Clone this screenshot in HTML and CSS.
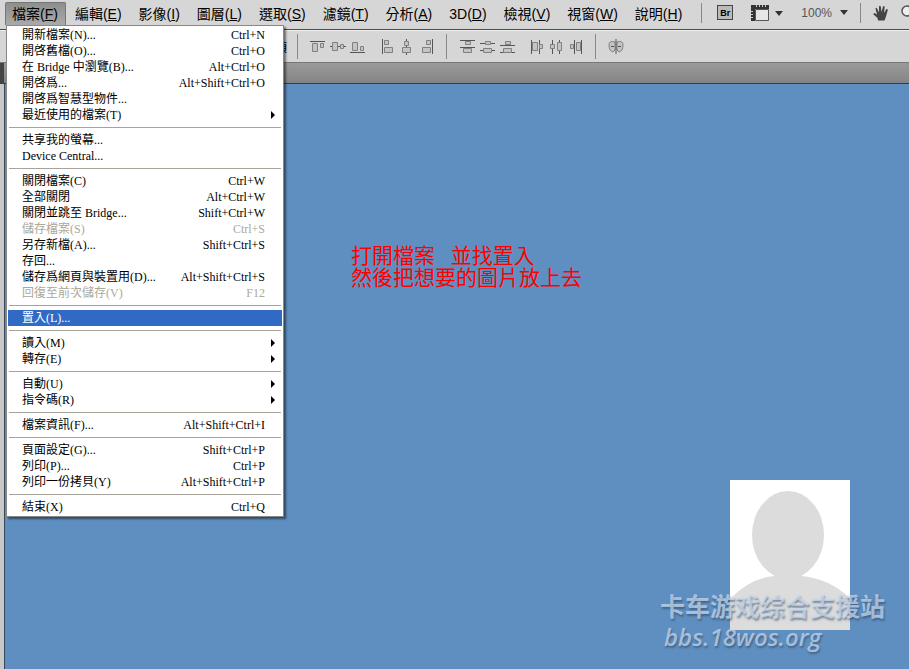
FILE: index.html
```
<!DOCTYPE html>
<html lang="zh-Hant">
<head>
  <meta charset="UTF-8">
  <meta name="viewport" content="width=device-width, initial-scale=1">
  <title>Photoshop</title>
  <link rel="stylesheet" href="styles.css">
</head>
<body>
  <div class="app">
    <header class="menubar">
      <nav class="menus">
        <div class="menu-holder">
          <button type="button" class="menu-btn open">檔案(<u>F</u>)</button>
          <div class="dropdown">
            <button type="button" class="row">開新檔案(N)...<span>Ctrl+N</span></button>
            <button type="button" class="row">開啓舊檔(O)...<span>Ctrl+O</span></button>
            <button type="button" class="row">在 Bridge 中瀏覽(B)...<span>Alt+Ctrl+O</span></button>
            <button type="button" class="row">開啓爲...<span>Alt+Shift+Ctrl+O</span></button>
            <button type="button" class="row">開啓爲智慧型物件...</button>
            <button type="button" class="row sub">最近使用的檔案(T)</button>
            <hr>
            <button type="button" class="row">共享我的螢幕...</button>
            <button type="button" class="row">Device Central...</button>
            <hr>
            <button type="button" class="row">關閉檔案(C)<span>Ctrl+W</span></button>
            <button type="button" class="row">全部關閉<span>Alt+Ctrl+W</span></button>
            <button type="button" class="row">關閉並跳至 Bridge...<span>Shift+Ctrl+W</span></button>
            <button type="button" class="row" disabled>儲存檔案(S)<span>Ctrl+S</span></button>
            <button type="button" class="row">另存新檔(A)...<span>Shift+Ctrl+S</span></button>
            <button type="button" class="row">存回...</button>
            <button type="button" class="row">儲存爲網頁與裝置用(D)...<span>Alt+Shift+Ctrl+S</span></button>
            <button type="button" class="row" disabled>回復至前次儲存(V)<span>F12</span></button>
            <hr>
            <button type="button" class="row active">置入(L)...</button>
            <hr>
            <button type="button" class="row sub">讀入(M)</button>
            <button type="button" class="row sub">轉存(E)</button>
            <hr>
            <button type="button" class="row sub">自動(U)</button>
            <button type="button" class="row sub">指令碼(R)</button>
            <hr>
            <button type="button" class="row">檔案資訊(F)...<span>Alt+Shift+Ctrl+I</span></button>
            <hr>
            <button type="button" class="row">頁面設定(G)...<span>Shift+Ctrl+P</span></button>
            <button type="button" class="row">列印(P)...<span>Ctrl+P</span></button>
            <button type="button" class="row">列印一份拷貝(Y)<span>Alt+Shift+Ctrl+P</span></button>
            <hr>
            <button type="button" class="row">結束(X)<span>Ctrl+Q</span></button>
          </div>
        </div>
        <button type="button" class="menu-btn">編輯(<u>E</u>)</button>
        <button type="button" class="menu-btn">影像(<u>I</u>)</button>
        <button type="button" class="menu-btn">圖層(<u>L</u>)</button>
        <button type="button" class="menu-btn">選取(<u>S</u>)</button>
        <button type="button" class="menu-btn">濾鏡(<u>T</u>)</button>
        <button type="button" class="menu-btn">分析(<u>A</u>)</button>
        <button type="button" class="menu-btn">3D(<u>D</u>)</button>
        <button type="button" class="menu-btn">檢視(<u>V</u>)</button>
        <button type="button" class="menu-btn">視窗(<u>W</u>)</button>
        <button type="button" class="menu-btn">說明(<u>H</u>)</button>
      </nav>
      <div class="tools">
        <i class="divider"></i>
        <button type="button" class="bridge" aria-label="Bridge">Br</button>
        <button type="button" class="tool extras" aria-label="檢視其他項目">
          <svg width="32" height="16" viewBox="0 0 32 16">
            <path d="M0 0h18v4H4v12H0z" fill="#333"/>
            <path d="M4.500 4.500h13v11h-13z" fill="#e6e6e6" stroke="#555"/>
            <path d="M5.500 0v2M8.500 0v2M11.500 0v2M14.500 0v2M0 6.500h2M0 9.500h2M0 12.500h2" stroke="#ccc"/>
            <path d="M24 6h8l-4 5z" fill="#333"/>
          </svg>
        </button>
        <button type="button" class="tool">100%
          <svg width="8" height="5" viewBox="0 0 8 5"><path d="M0 0h8l-4 5z" fill="#333"/></svg>
        </button>
        <i class="divider"></i>
        <button type="button" class="tool" aria-label="手形工具">
          <svg width="16" height="16" viewBox="0 0 16 16">
            <path d="M5 15.500L4.500 13 .5 9.500Q0 8 1.500 8L4 9.500 2.500 3.500Q3 2 4 3.200L6 7.500 6 1.500Q7 0 7.800 1.500L8.500 7 10 1.500Q11 .5 11.700 2L11 8 13.300 4.300Q14.600 3.500 14.800 5L13 11.500 11.500 15.500z" fill="#444"/>
          </svg>
        </button>
        <button type="button" class="tool" aria-label="縮放工具">
          <svg width="16" height="16" viewBox="0 0 16 16"><circle cx="6" cy="6" r="5" fill="#eee" stroke="#555" stroke-width="1.500"/><path d="M10 10l5 5" stroke="#555" stroke-width="2"/></svg>
        </button>
      </div>
    </header>

    <div class="options">
      <span class="opt-label">項</span>
      <i class="divider"></i>
      <div class="group">
        <svg width="16" height="14" viewBox="0 0 16 14"><path d="M0 1.500h15" class="ln"/><path d="M2.500 3.500h5v8h-5zM10.500 3.500h3v4h-3z" class="bx"/></svg>
        <svg width="16" height="14" viewBox="0 0 16 14"><path d="M0 6.500h16" class="ln"/><path d="M2.500 2.500h5v8h-5zM10.500 4.500h3v4h-3z" class="bx"/></svg>
        <svg width="16" height="14" viewBox="0 0 16 14"><path d="M0 12.500h15" class="ln"/><path d="M2.500 2.500h5v8h-5zM10.500 6.500h3v4h-3z" class="bx"/></svg>
      </div>
      <div class="group">
        <svg width="16" height="16" viewBox="0 0 16 16"><path d="M4.500 0v15" class="ln"/><path d="M6.500 1.500h4v4h-4zM6.500 8.500h8v5h-8z" class="bx"/></svg>
        <svg width="16" height="16" viewBox="0 0 16 16"><path d="M8.500 0v16" class="ln"/><path d="M6.500 2.500h4v4h-4zM4.500 8.500h8v5h-8z" class="bx"/></svg>
        <svg width="16" height="16" viewBox="0 0 16 16"><path d="M14.500 0v15" class="ln"/><path d="M8.500 1.500h4v4h-4zM4.500 8.500h8v5h-8z" class="bx"/></svg>
      </div>
      <i class="divider"></i>
      <div class="group">
        <svg width="16" height="14" viewBox="0 0 16 14"><path d="M1 .5h15M1 7.500h15" class="ln"/><path d="M6.500 1.500h5v3h-5zM4.500 8.500h8v4h-8z" class="bx"/></svg>
        <svg width="16" height="14" viewBox="0 0 16 14"><path d="M1 3.500h15M1 10.500h15" class="ln"/><path d="M6.500 1.500h5v3h-5zM4.500 8.500h8v4h-8z" class="bx"/></svg>
        <svg width="16" height="14" viewBox="0 0 16 14"><path d="M1 5.500h15M1 12.500h15" class="ln"/><path d="M6.500 1.500h5v3h-5zM4.500 8.500h8v4h-8z" class="bx"/></svg>
      </div>
      <div class="group">
        <svg width="16" height="14" viewBox="0 0 16 14"><path d="M4.500 0v14M12.500 0v14" class="ln"/><path d="M5.500 2.500h5v8h-5zM12.500 4.500h3v4h-3z" class="bx"/></svg>
        <svg width="16" height="14" viewBox="0 0 16 14"><path d="M5.500 0v14M12.500 0v14" class="ln"/><path d="M3.500 4.500h4v4h-4zM10.500 2.500h4v8h-4z" class="bx"/></svg>
        <svg width="16" height="14" viewBox="0 0 16 14"><path d="M7.500 0v14M14.500 0v14" class="ln"/><path d="M3.500 4.500h3v4h-3zM9.500 2.500h4v8h-4z" class="bx"/></svg>
      </div>
      <i class="divider"></i>
      <div class="group">
        <svg width="16" height="16" viewBox="0 0 16 16"><path d="M7 3Q1 1 1 6Q1 12 5 13L7 11zM9 3Q15 1 15 6Q15 12 11 13L9 11z" class="bx"/><path d="M8 0v15M3 7.500h3M10 7.500h3" class="ln"/></svg>
      </div>
    </div>

    <div class="tabstrip"></div>

    <main class="canvas">
      <p class="note">打開檔案&ensp; 並找置入<br>然後把想要的圖片放上去</p>
      <div class="avatar">
        <svg width="120" height="150" viewBox="0 0 120 150">
          <ellipse cx="58" cy="55" rx="36" ry="44" fill="#dcdcdc"/>
          <path d="M0 119Q20 98 45 96V88H71V96Q98 98 120 118V150H0z" fill="#dcdcdc"/>
        </svg>
      </div>
      <div class="watermark">
        <div class="site">卡车游戏综合支援站</div>
        <div class="url">bbs.18wos.org</div>
      </div>
    </main>
  </div>
</body>
</html>
```
FILE: styles.css
```
* {
  box-sizing: border-box;
}
body {
  margin: 0;
  font-family: "Liberation Sans", "Noto Sans CJK TC", sans-serif;
  color: #000;
}
button {
  border: 0;
  margin: 0;
  padding: 0;
  background: none;
  color: inherit;
  font-family: inherit;
}
.app {
  display: flex;
  flex-direction: column;
  min-height: 100vh;
  overflow: hidden;
}

/* menu bar */
.menubar {
  display: flex;
  height: 30px;
  background: #d6d6d6;
  border-bottom: 1px solid #4c4c4c;
}
.menus {
  display: flex;
  flex: none;
  gap: 1px;
  padding: 2px 0 4px 5px;
}
.menu-holder {
  position: relative;
  display: flex;
}
.menu-btn {
  padding: 0 8px;
  font-size: 14px;
  line-height: 22px;
  white-space: nowrap;
}
.menu-btn.open {
  background: linear-gradient(#8e8e8e, #aaa);
  border: 1px solid #777;
  border-bottom: 0;
  border-radius: 2px 2px 0 0;
  padding: 0 7px 0 6px;
}
.tools {
  display: flex;
  flex: none;
  align-items: center;
  gap: 12px;
  padding: 0 0 4px 11px;
}
.divider {
  flex: none;
  width: 1px;
  height: 20px;
  background: #888;
}
.bridge {
  width: 16px;
  height: 15px;
  margin-left: 3px;
  border: 1px solid #444;
  background: #bbb;
  font-size: 9px;
  font-weight: bold;
  line-height: 12px;
}
.tool {
  display: flex;
  align-items: center;
  gap: 8px;
  color: #555;
  font-size: 12px;
}
.extras {
  padding: 0 6px;
}

/* file menu */
.dropdown {
  position: absolute;
  z-index: 5;
  top: 23px;
  left: 1px;
  width: 278px;
  padding: 1px;
  background: #fff;
  border: 1px solid #888;
  box-shadow: 2px 2px 2px rgba(0, 0, 0, 0.5);
  font-family: "Liberation Serif", "Noto Sans CJK TC", serif;
}
.row {
  display: flex;
  justify-content: space-between;
  align-items: center;
  width: 100%;
  height: 16px;
  padding: 0 17px 0 14px;
  font-size: 12px;
  line-height: 16px;
  white-space: nowrap;
}
.row:disabled {
  color: #aca899;
}
.row.active {
  background: #316ac5;
  color: #fff;
}
.row.sub {
  padding-right: 7px;
}
.row.sub::after {
  content: "";
  border-left: 4px solid #000;
  border-top: 4px solid transparent;
  border-bottom: 4px solid transparent;
}
.dropdown hr {
  height: 1px;
  margin: 4px 1px;
  border: 0;
  background: #a5a39a;
}

/* options bar */
.options {
  display: flex;
  align-items: center;
  gap: 12px;
  height: 33px;
  background: #d6d6d6;
  border-top: 1px solid #eee;
  border-bottom: 1px solid #777;
}
.options .divider {
  height: 25px;
}
.opt-label {
  width: 287px;
  margin-right: -2px;
  font-size: 12px;
  text-align: right;
}
.group {
  display: flex;
  align-items: center;
  gap: 4px;
}
.ln {
  fill: none;
  stroke: #555;
}
.bx {
  fill: #c4c4c4;
  stroke: #808080;
}
.tabstrip {
  height: 21px;
  background: linear-gradient(#9a9a9a, #848484);
  border-left: 4px solid #444;
  border-bottom: 1px solid #2c3e50;
}

/* document */
.canvas {
  position: relative;
  flex: 1;
  background: #5f8fc0;
  border-left: 4px solid #c8c8c8;
  box-shadow: inset 1px 0 #34495e;
}
.note {
  margin: 0;
  padding: 161px 0 0 347px;
  color: #f00;
  font-family: "Liberation Serif", "Noto Sans CJK TC", serif;
  font-size: 21px;
  line-height: 22px;
}
.avatar {
  position: absolute;
  right: 59px;
  bottom: 39px;
  width: 120px;
  height: 150px;
  background: #fff;
}
.watermark {
  position: absolute;
  right: 19px;
  bottom: 16px;
  width: 230px;
  color: rgba(205, 222, 240, 0.7);
  text-shadow: 1px 2px 2px rgba(40, 60, 90, 0.5);
}
.site {
  font-family: "Noto Sans CJK SC", sans-serif;
  font-size: 25px;
  font-weight: 700;
  line-height: 32px;
  white-space: nowrap;
}
.url {
  padding-left: 4px;
  font-family: "Open Sans", sans-serif;
  font-size: 24px;
  font-style: italic;
  font-weight: 600;
  line-height: 32px;
}
```
